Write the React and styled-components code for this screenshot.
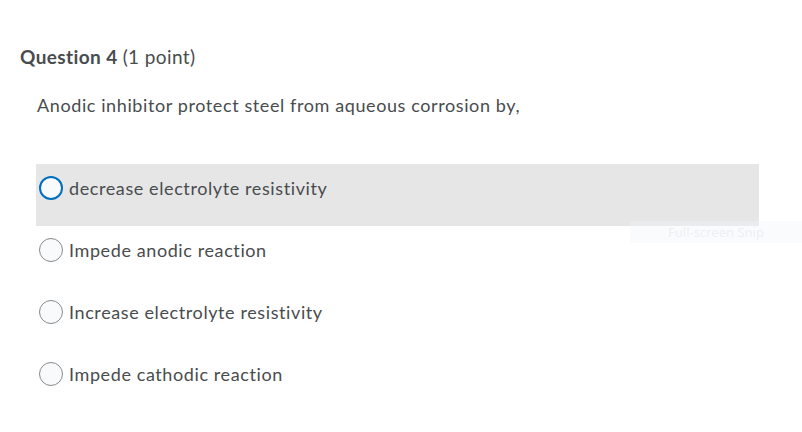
import React from "react"
import styled, { createGlobalStyle } from "styled-components"

const Global = createGlobalStyle`
  html, body {
    margin: 0;
    background: #ffffff;
  }
  body {
    font-family: Lato, "Open Sans", sans-serif;
    color: #494c4e;
  }
`

const Page = styled.div`
  width: 802px;
  height: 432px;
  position: relative;
  overflow: hidden;
  padding: 44px 0 0 20px;
  box-sizing: border-box;
`

const Heading = styled.h2`
  margin: 0;
  font-size: 19px;
  font-weight: 700;
  line-height: 26px;
  letter-spacing: 0.4px;
  color: #494c4e;

  span {
    font-weight: 400;
  }
`

const Prompt = styled.p`
  margin: 23px 0 0 17px;
  font-size: 18px;
  line-height: 24px;
  letter-spacing: 0.6px;
`

const Options = styled.div`
  margin: 47px 0 0 16px;
  width: 723px;
  display: flex;
  flex-direction: column;
`

const Option = styled.label`
  display: flex;
  align-items: center;
  gap: 6px;
  height: 62px;
  box-sizing: border-box;
  padding: 0 0 14px 3px;
  background: ${(p) => (p.$active ? "#e6e6e6" : "transparent")};
  font-size: 18px;
  letter-spacing: 0.6px;
  cursor: pointer;
`

const Radio = styled.span`
  width: 24px;
  height: 24px;
  box-sizing: border-box;
  border-radius: 50%;
  border: ${(p) => (p.$active ? "2px solid #006fbf" : "1px solid #868a8e")};
  background: #f9fafb;
  flex-shrink: 0;
`

const Snip = styled.div`
  position: absolute;
  left: 630px;
  top: 221px;
  width: 172px;
  height: 22px;
  background: rgba(240, 244, 250, 0.35);
  color: rgba(215, 220, 228, 0.4);
  font-family: "Noto Sans", sans-serif;
  font-size: 13px;
  line-height: 22px;
  text-align: center;
`

const answers = [
  "decrease electrolyte resistivity",
  "Impede anodic reaction",
  "Increase electrolyte resistivity",
  "Impede cathodic reaction",
]

export default function App() {
  return (
    <Page>
      <Global />
      <Heading>
        Question 4 <span>(1 point)</span>
      </Heading>
      <Prompt>Anodic inhibitor protect steel from aqueous corrosion by,</Prompt>
      <Options>
        {answers.map((a, i) => (
          <Option key={a} $active={i === 0}>
            <Radio $active={i === 0} />
            {a}
          </Option>
        ))}
      </Options>
      <Snip>Full-screen Snip</Snip>
    </Page>
  )
}
